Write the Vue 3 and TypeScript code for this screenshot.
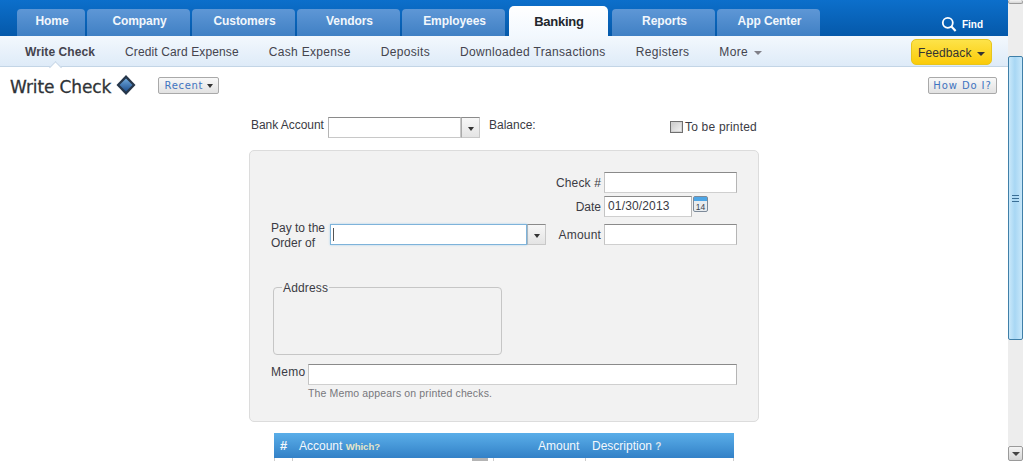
<script setup lang="ts">
interface Tab { label: string; w: number; active?: boolean }
const tabs: Tab[] = [
  { label: 'Home', w: 68 },
  { label: 'Company', w: 103 },
  { label: 'Customers', w: 103 },
  { label: 'Vendors', w: 103 },
  { label: 'Employees', w: 103 },
  { label: 'Banking', w: 99, active: true },
  { label: 'Reports', w: 103 },
  { label: 'App Center', w: 103 },
]
const subs = ['Credit Card Expense', 'Cash Expense', 'Deposits', 'Downloaded Transactions', 'Registers']
</script>

<template>
  <div class="page">
    <div class="main">
      <header class="topbar">
        <nav class="tabs">
          <div v-for="t in tabs" :key="t.label" class="tab" :class="{ active: t.active }" :style="{ width: t.w + 'px' }">{{ t.label }}</div>
        </nav>
        <div class="find">
          <svg width="16" height="16" viewBox="0 0 16 16"><circle cx="6.800" cy="6.800" r="5" fill="none" stroke="#fff" stroke-width="1.800"/><path d="M10.400 10.600 14.600 15" stroke="#fff" stroke-width="2.200" fill="none"/></svg>
          <span>Find</span>
        </div>
      </header>
      <div class="subbar">
        <div class="sub current">Write Check<i class="caret-up"></i></div>
        <div v-for="s in subs" :key="s" class="sub">{{ s }}</div>
        <div class="sub">More <b class="tri grey"></b></div>
        <button class="feedback">Feedback <b class="tri dark"></b></button>
      </div>
      <div class="titlebar">
        <h1>Write Check</h1>
        <svg class="diamond" width="20" height="21" viewBox="0 0 20 21">
          <defs><linearGradient id="dg" x1="0" y1="0" x2="0" y2="1"><stop offset="0" stop-color="#6fa8dc"/><stop offset="1" stop-color="#1d4f8f"/></linearGradient></defs>
          <path d="M10 0 19.500 10 10 20 .5 10Z" fill="#26364a"/>
          <path d="M10 3.500 16.500 10 10 16.500 3.500 10Z" fill="url(#dg)"/>
        </svg>
        <button class="mini recent">Recent <b class="tri dark small"></b></button>
        <button class="mini howdo">How Do I?</button>
      </div>

      <div class="form">
        <div class="account-row">
          <label class="acct-label">Bank Account</label>
          <div class="combo acct"><div class="combo-input"></div><div class="combo-btn"><b class="tri dark"></b></div></div>
          <span class="balance">Balance:</span>
          <label class="printed"><span class="box"></span>To be printed</label>
        </div>

        <section class="check">
          <div class="line line-num"><label>Check #</label><div class="field w133"></div></div>
          <div class="line line-date">
            <label>Date</label>
            <div class="field date">01/30/2013</div>
            <svg class="cal" width="15" height="16" viewBox="0 0 15 16">
              <rect x=".5" y=".5" width="14" height="15" rx="1.500" fill="#e8ecef" stroke="#7d8a99"/>
              <rect x="1" y="1" width="13" height="4" fill="#4ea6e6"/>
              <text x="7.500" y="13.500" text-anchor="middle" class="caltext">14</text>
            </svg>
          </div>
          <div class="pay-row">
            <label class="pay-label">Pay to the<br />Order of</label>
            <div class="combo pay"><div class="combo-input focus"><i class="cursor"></i></div><div class="combo-btn"><b class="tri dark"></b></div></div>
            <label class="amt-label">Amount</label>
            <div class="field w133"></div>
          </div>
          <fieldset class="address"><legend>Address</legend></fieldset>
          <div class="memo-row"><label>Memo</label><div class="field memo"></div></div>
          <p class="hint">The Memo appears on printed checks.</p>
        </section>

        <div class="grid-head">
          <span class="h-num">#</span>
          <span class="h-acct">Account <small>Which?</small></span>
          <span class="h-amt">Amount</span>
          <span class="h-desc">Description <small class="q">?</small></span>
        </div>
        <div class="grid-row">
          <i class="c1"></i><i class="c2"></i><i class="c3"></i><i class="c4"></i><i class="c5"></i><i class="c6"></i>
        </div>
      </div>
    </div>

    <aside class="scroll">
      <div class="sb-btn top"></div>
      <div class="sb-track">
        <div class="sb-thumb"><span class="grip"></span></div>
      </div>
      <div class="sb-btn"><b class="sb-down"></b></div>
    </aside>
  </div>
</template>

<style>
html, body { margin: 0; padding: 0; overflow: hidden; background: #fff; }
</style>

<style scoped>
.page { width: 1024px; height: 461px; display: flex; overflow: hidden; font-family: "Liberation Sans", Arial, sans-serif; font-size: 12px; color: #3b3b44; }
.main { width: 1008px; height: 461px; overflow: hidden; flex: none; }

.topbar { height: 36px; background: linear-gradient(#0c6fcb, #0559aa); display: flex; position: relative; }
.tabs { display: flex; gap: 2px; padding-left: 17px; align-items: flex-end; }
.tab { height: 27px; box-sizing: border-box; padding: 5px 0 0 2px; text-align: center; color: #f2f7fc; font-weight: bold; font-size: 12px; letter-spacing: -.08px; background: linear-gradient(#5e97d6, #4080c4); border-radius: 4px 4px 0 0; }
.tab.active { height: 30px; padding: 8px 0 0 1px; margin: 0 2px; background: linear-gradient(#fff, #f2f8fe); color: #22262c; border-radius: 5px 5px 0 0; font-size: 13px; letter-spacing: -.25px; }
.find { margin-left: auto; margin-right: 25px; display: flex; align-items: center; gap: 5px; color: #fff; font-size: 10px; font-weight: bold; padding-top: 12px; height: 24px; }

.subbar { height: 31px; box-sizing: border-box; display: flex; align-items: center; background: linear-gradient(#f3f8fd, #deebf8); border-bottom: 1px solid #c3d5e6; padding-left: 25px; position: relative; }
.sub { margin-right: 30px; font-size: 12px; color: #44444e; letter-spacing: .33px; white-space: nowrap; position: relative; padding-top: 1px; }
.sub.current { font-weight: bold; letter-spacing: .08px; }
.sub:nth-child(2) { letter-spacing: .12px; }
.caret-up { position: absolute; left: 26px; top: 19px; width: 8px; height: 8px; background: #fff; border-left: 1px solid #c3d5e6; border-top: 1px solid #c3d5e6; transform: rotate(45deg); }
.tri { display: inline-block; width: 0; height: 0; border-left: 4px solid transparent; border-right: 4px solid transparent; vertical-align: 1px; margin-left: 2px; }
.tri.grey { border-top: 4px solid #808088; }
.tri.dark { border-top: 4px solid #333; }
.feedback { margin-left: auto; margin-right: 16px; width: 81px; height: 26px; margin-top: 2px; padding: 1px 0 0; border: 1px solid #e7c51c; border-radius: 5px; background: linear-gradient(#fde349, #fbcb09); font: 12px "Liberation Sans", Arial, sans-serif; color: #333; letter-spacing: .1px; }

.titlebar { height: 38px; display: flex; align-items: center; padding: 1px 11px 0 10px; box-sizing: border-box; }
h1 { margin: 0; font: 17px "DejaVu Sans", sans-serif; color: #2f3337; letter-spacing: -.12px; -webkit-text-stroke: .3px #2f3337; }
.diamond { margin-left: 5px; margin-top: -3px; }
.mini { height: 17px; box-sizing: border-box; padding: 0; border: 1px solid #a9a9a9; border-radius: 2px; background: linear-gradient(#f8f8f8, #e2e2e2); color: #3f74c0; font: 10px "DejaVu Sans", sans-serif; letter-spacing: .7px; margin-top: -3px; }
.recent { width: 61px; margin-left: 22px; }
.tri.small { border-left-width: 3.500px; border-right-width: 3.500px; margin-left: 0; }
.howdo { width: 69px; margin-left: auto; letter-spacing: .9px; }

.form { width: 510px; margin-left: 249px; }
.account-row { height: 45px; display: flex; position: relative; align-items: flex-start; padding-top: 12px; box-sizing: border-box; }
.acct-label { margin-left: 2px; margin-top: 1px; width: 77px; letter-spacing: -.05px; }
.combo { display: flex; height: 21px; box-sizing: border-box; }
.combo-input { flex: 1; box-sizing: border-box; background: #fff; border: 1px solid #c8c8c8; border-top-color: #8a8a8a; border-left-color: #b5b5b5; }
.combo-btn { width: 19px; box-sizing: border-box; display: flex; align-items: center; justify-content: center; background: linear-gradient(#f7f7f7, #e4e4e4); border: 1px solid #c8c8c8; border-left-color: #aaa; border-top-color: #8a8a8a; padding-top: 2px; }
.combo-btn .tri { border-left-width: 3.500px; border-right-width: 3.500px; margin: 0; }
.acct { width: 152px; }
.balance { margin-left: 9px; margin-top: 1px; }
.printed { position: absolute; right: 2px; top: 15px; display: flex; align-items: center; letter-spacing: .2px; }
.box { width: 11px; height: 10px; margin-right: 2px; margin-top: -1px; border: 1px solid #6f6f6f; background: linear-gradient(135deg, #c8c8c8, #f4f4f4); box-shadow: inset 0 0 0 1px #d2d2d2; }

.check { height: 272px; box-sizing: border-box; background: #f2f2f2; border: 1px solid #dcdcdc; border-radius: 5px; padding: 21px 21px 0 21px; }
.line { display: flex; justify-content: flex-end; align-items: center; height: 21px; }
.line label { margin-right: 3px; }
.line-num label { letter-spacing: .15px; }
.line-date { margin-top: 3px; position: relative; }
.field { height: 21px; box-sizing: border-box; background: #fff; border: 1px solid #cfcfcf; border-top-color: #8a8a8a; border-left-color: #c4c4c4; border-right-color: #b5b5b5; }
.w133 { width: 133px; flex: none; }
.date { width: 88px; padding-left: 3px; line-height: 19px; font-size: 12px; letter-spacing: .15px; margin-right: 45px; }
.cal { position: absolute; right: 29px; top: 0; }
.caltext { font: 8.500px "Liberation Sans", sans-serif; fill: #3a4450; }
.pay-row { display: flex; align-items: flex-start; margin-top: 7px; height: 42px; }
.pay-label { width: 59px; line-height: 15px; margin-top: -3px; }
.combo.pay { width: 217px; }
.combo-input.focus { border: 1px solid #7eb3da; box-shadow: 0 0 2px #a8d0ec; position: relative; }
.cursor { position: absolute; left: 2px; top: 3px; width: 1px; height: 13px; background: #555; }
.amt-label { width: 55px; text-align: right; margin: 4px 3px 0 0; letter-spacing: .17px; }
.address { width: 229px; height: 75px; box-sizing: border-box; margin: 14px 0 0 2px; padding: 0 0 0 8px; border: 1px solid #c6c6c6; border-radius: 4px; }
.address legend { padding: 2px 1px 0; line-height: 12px; letter-spacing: .15px; }
.memo-row { display: flex; margin-top: 9px; height: 21px; }
.memo-row label { width: 37px; line-height: 15px; letter-spacing: .25px; padding-top: 1px; }
.memo { width: 429px; }
.hint { margin: 2px 0 0 37px; font-size: 10.500px; color: #77777c; letter-spacing: .14px; }

.grid-head { margin-top: 11px; margin-left: 25px; width: 460px; height: 25px; background: linear-gradient(#5aaee9, #3381c7); color: #f3f8fc; position: relative; }
.grid-head span { position: absolute; top: 6px; white-space: nowrap; }
.h-num { left: 6px; font-weight: bold; font-size: 13px; top: 5px !important; }
.h-acct { left: 25px; }
.h-acct small { font-size: 9.500px; font-weight: bold; color: #e6e6c8; }
.h-amt { left: 264px; }
.h-desc { left: 318px; }
.q { font-size: 10px; font-weight: bold; color: #d8e2ea; }
.grid-row { margin-left: 25px; width: 460px; height: 3px; position: relative; }
.grid-row i { position: absolute; top: 0; height: 3px; width: 1px; background: #ccc; }
.c1 { left: 0; }
.c2 { left: 18px; }
.grid-row .c3 { left: 198px; width: 16px; background: #b4b4b4; }
.c4 { left: 219px; }
.c5 { left: 311px; }
.c6 { left: 459px; }

.scroll { width: 16px; height: 461px; flex: none; display: flex; flex-direction: column; background: #fff; }
.sb-btn { height: 15px; width: 15px; flex: none; box-sizing: border-box; border: 1px solid #9a9a9a; border-radius: 2px; background: linear-gradient(#f4f4f4, #d5d5d5); display: flex; align-items: center; justify-content: center; }
.sb-btn.top { height: 4px; border-top: 0; }
.sb-down { width: 0; height: 0; border: 4px solid transparent; border-top: 4px solid #444; border-bottom: 0; }
.sb-track { flex: 1; width: 15px; background: #ededed; padding-top: 52px; box-sizing: border-box; }
.sb-thumb { height: 284px; box-sizing: border-box; border: 1px solid #3f7fa8; border-radius: 2px; background: linear-gradient(90deg, #c9e8fa, #a8d7f4 45%, #c7e7fa); display: flex; align-items: center; justify-content: center; }
.grip { width: 7px; height: 5px; border-top: 1px solid #3b6f96; border-bottom: 1px solid #3b6f96; background: linear-gradient(#3b6f96, #3b6f96) center / 100% 1px no-repeat; }
</style>
